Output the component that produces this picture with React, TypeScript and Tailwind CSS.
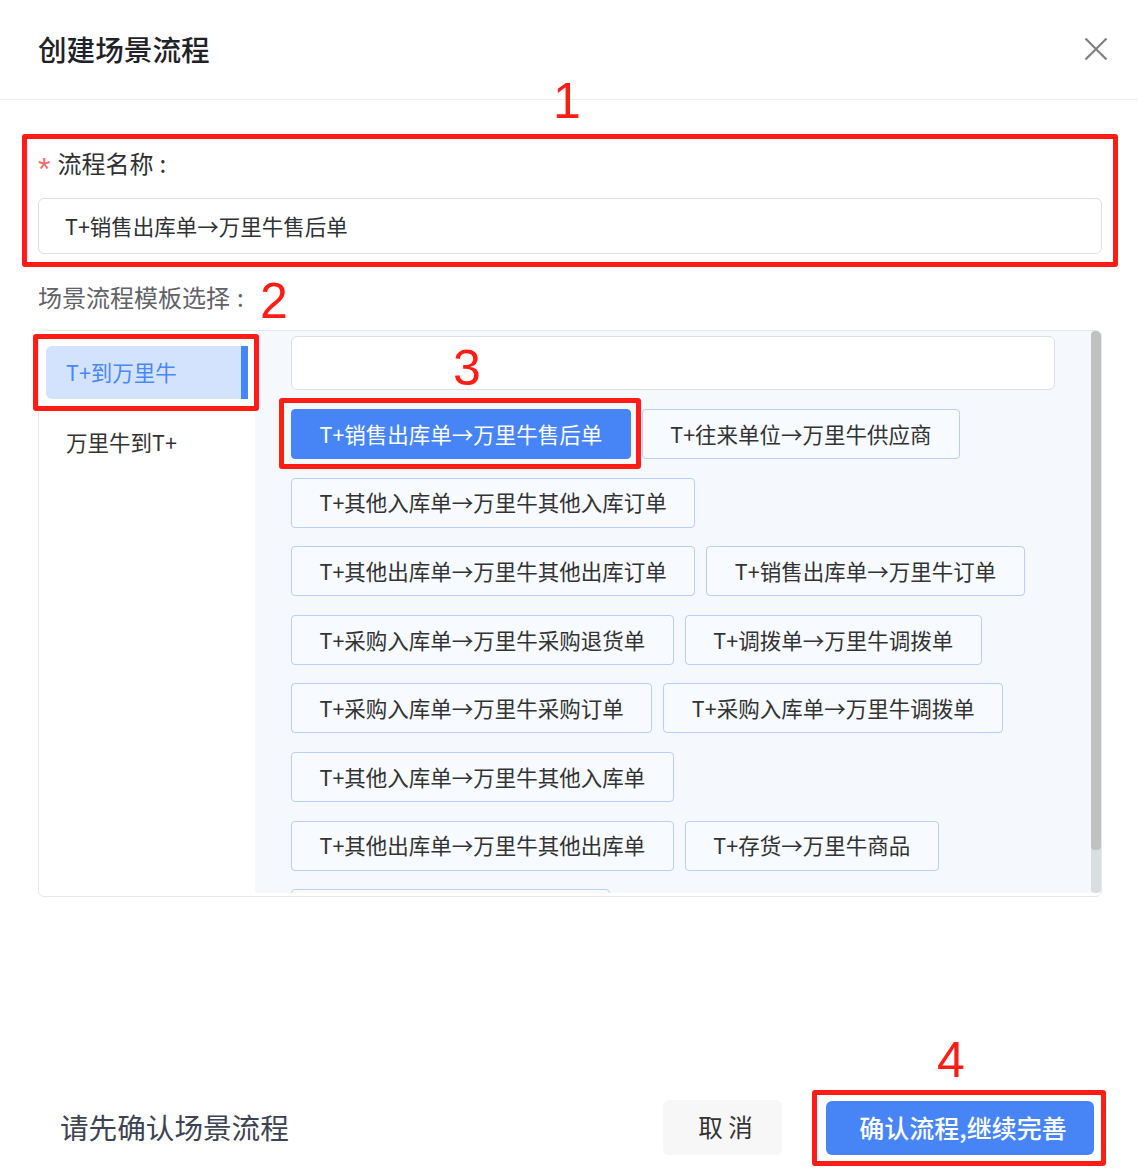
import React from "react";

const FONT = { fontFamily: '"Noto Sans CJK SC", "Noto Sans", sans-serif' };

const rows: { label: string; active?: boolean }[][] = [
  [{ label: "T+销售出库单→万里牛售后单", active: true }, { label: "T+往来单位→万里牛供应商" }],
  [{ label: "T+其他入库单→万里牛其他入库订单" }],
  [{ label: "T+其他出库单→万里牛其他出库订单" }, { label: "T+销售出库单→万里牛订单" }],
  [{ label: "T+采购入库单→万里牛采购退货单" }, { label: "T+调拨单→万里牛调拨单" }],
  [{ label: "T+采购入库单→万里牛采购订单" }, { label: "T+采购入库单→万里牛调拨单" }],
  [{ label: "T+其他入库单→万里牛其他入库单" }],
  [{ label: "T+其他出库单→万里牛其他出库单" }, { label: "T+存货→万里牛商品" }],
];

function RedBox({ className }: { className: string }) {
  return <div className={`absolute border-[5px] border-[#ff1c14] rounded-[3px] pointer-events-none ${className}`} />;
}

function RedNum({ n, className }: { n: string; className: string }) {
  return (
    <div
      className={`absolute text-[50px] leading-none text-[#ff1c14] ${className}`}
      style={{ fontFamily: '"Liberation Sans", Arial, sans-serif' }}
    >
      {n}
    </div>
  );
}

export default function App() {
  return (
    <div className="relative w-[1138px] h-[1176px] bg-white overflow-hidden" style={FONT}>
      {/* Header */}
      <div className="h-[100px] border-b border-[#ebeef5] flex items-center justify-between pl-[38px] pr-[30px]">
        <div className="text-[28.6px] text-[#1f2329] font-medium leading-none -mt-[1px]">创建场景流程</div>
        <svg width="24" height="24" viewBox="0 0 24 24" className="-mt-[2px]">
          <path d="M1.5 1.5 L22.5 22.5 M22.5 1.5 L1.5 22.5" stroke="#7f7f7f" strokeWidth="2.2" />
        </svg>
      </div>

      <div className="pl-[38px] pr-[36px]">
        {/* Flow name */}
        <div className="mt-[47px] h-[32px] flex items-center">
          <span
            className="text-[#f56c6c] text-[32px] leading-none mr-[7px] mt-[12px]"
            style={{ fontFamily: '"Liberation Sans", Arial, sans-serif' }}
          >
            *
          </span>
          <span className="text-[24px] text-[#303133]">流程名称</span>
          <span className="text-[24px] text-[#303133] ml-[6px]">:</span>
        </div>
        <div className="mt-[19px] h-[56px] border border-[#dcdfe6] rounded-[6px] flex items-center pl-[26px] text-[21.5px] text-[#303133]">
          T+销售出库单→万里牛售后单
        </div>

        {/* Template label */}
        <div className="mt-[27px] h-[32px] flex items-center text-[24px] text-[#606266]">
          <span>场景流程模板选择</span>
          <span className="ml-[7px]">:</span>
        </div>

        {/* Panel */}
        <div className="mt-[17px] h-[567px] border border-[#e4e7ed] rounded-[6px] flex pb-[3px] overflow-hidden">
          <div className="w-[216px] bg-white pt-[15px] pl-[7px] flex flex-col gap-[17px]">
            <div className="w-[202px] h-[53px] bg-[#d3e3fd] rounded-l-[6px] flex items-center justify-between pl-[20px]">
              <span className="text-[21.5px] text-[#4a87f7]">T+到万里牛</span>
              <span className="w-[7px] h-full bg-[#4786f8]" />
            </div>
            <div className="w-[202px] h-[53px] flex items-center pl-[20px]">
              <span className="text-[21.5px] text-[#333333]">万里牛到T+</span>
            </div>
          </div>
          <div className="flex-1 bg-[#f5f8fc] flex">
            <div className="flex-1 pl-[36px] pr-[36px] pt-[5px] overflow-hidden">
              <div className="h-[54px] bg-white border border-[#dcdfe6] rounded-[6px]" />
              <div className="mt-[19px] flex flex-col gap-[18.6px]">
                {rows.map((row, i) => (
                  <div key={i} className="flex gap-[11px]">
                    {row.map((b) => (
                      <div
                        key={b.label}
                        className={
                          b.active
                            ? "h-[50px] px-[27.5px] flex items-center rounded-[4px] bg-[#4785f7] border border-[#4785f7] text-white text-[21.5px] whitespace-nowrap"
                            : "h-[50px] px-[27.5px] flex items-center rounded-[4px] bg-[#f7faff] border border-[#b6cffb] text-[#333333] text-[21.5px] whitespace-nowrap"
                        }
                      >
                        {b.label}
                      </div>
                    ))}
                  </div>
                ))}
                <div className="flex">
                  <div className="w-[319px] h-[50px] rounded-[4px] bg-[#f7faff] border border-[#b6cffb] shrink-0" />
                </div>
              </div>
            </div>
            <div className="w-[10px] flex flex-col rounded-[4px] overflow-hidden bg-[#d9dee0]">
              <div className="h-[519px] bg-[#c1c1c1] rounded-[4px]" />
            </div>
          </div>
        </div>
      </div>

      {/* Footer */}
      <div className="mt-[203px] h-[55px] flex items-center justify-between pl-[60px] pr-[44px]">
        <div className="text-[28.6px] text-[#3d4352]">请先确认场景流程</div>
        <div className="flex items-center gap-[44px]">
          <div className="w-[119px] h-[55px] bg-[#f7f7f7] rounded-[6px] flex items-center justify-center pl-[6px] text-[24.5px] text-[#333333]">
            取 消
          </div>
          <div className="w-[268px] h-[54px] bg-[#4785f7] rounded-[6px] flex items-center justify-center pl-[6px] text-[25px] text-white font-medium">
            确认流程,继续完善
          </div>
        </div>
      </div>

      {/* Annotations */}
      <RedBox className="left-[22px] top-[134px] w-[1096px] h-[133px]" />
      <RedBox className="left-[33px] top-[334px] w-[226px] h-[77px]" />
      <RedBox className="left-[279px] top-[398px] w-[362px] h-[71px]" />
      <RedBox className="left-[812px] top-[1090px] w-[294px] h-[76px]" />
      <RedNum n="1" className="left-[553px] top-[76px]" />
      <RedNum n="2" className="left-[260px] top-[276px]" />
      <RedNum n="3" className="left-[453px] top-[343px]" />
      <RedNum n="4" className="left-[937px] top-[1035px]" />
    </div>
  );
}
